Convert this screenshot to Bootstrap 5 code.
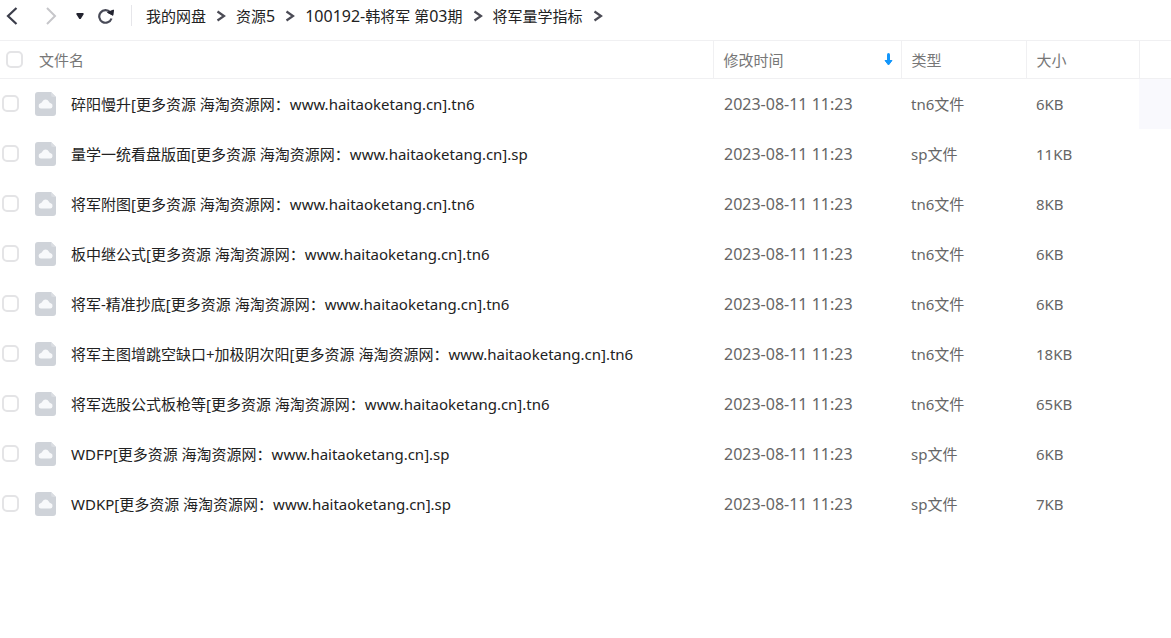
<!DOCTYPE html>
<html lang="zh-CN">
<head>
<meta charset="utf-8">
<meta name="viewport" content="width=device-width, initial-scale=1">
<title>将军量学指标</title>
<link href="https://cdn.jsdelivr.net/npm/bootstrap@5.3.0/dist/css/bootstrap.min.css" rel="stylesheet">
<style>
body { font-family: "Noto Sans", "Noto Sans CJK SC", sans-serif; font-size: 15px; line-height: 22px; color: #333; background: #fff; }
.toolbar { height: 40px; padding: 0 0 9px 2px; }
.tool { border: 0; background: none; padding: 0; width: 20px; height: 24px; display: flex; align-items: center; justify-content: center; }
.tool svg, .file-icon, .crumb-arrow, .sort svg { display: block; flex: none; }
.history { width: 16px; margin: 0 8px 0 14px; }
.divider { width: 1px; height: 21px; background: #e6e6ea; margin: 0 14px 0 15px; }
.crumbs a { color: #222; text-decoration: none; white-space: nowrap; }
.crumbs li { display: flex; align-items: center; }
.crumb-arrow { margin: 0 10px; }
.digits { font-size: 16px; }
.files { table-layout: fixed; width: 100%; }
.files th { height: 38px; padding: 0 8px 0 10px; font-weight: 400; color: #777; border: solid #f0f0f2; border-width: 1px 0 1px 1px; }
.files th:first-child { border-left: 0; padding-left: 6px; }
.files td { height: 50px; padding: 0 9px 0 10px; color: #666; white-space: nowrap; }
.files td:first-child { padding-left: 2px; }
.files td.digits { padding-left: 11px; }
.files label { color: #222; }
.col-date { width: 188px; } .col-type { width: 125px; } .col-size { width: 113px; } .col-more { width: 32px; }
.files .more-active { background: #f9f9fd; }
.form-check-input.pick { width: 17px; height: 17px; margin: 0; border: 2px solid #e4e4e6; border-radius: 5px; flex: none; }
.file-icon { margin: 0 15px 0 16px; }
.sort { border: 0; background: none; padding: 0; }
</style>
</head>
<body>
<svg class="d-none" aria-hidden="true">
  <symbol id="file" viewBox="0 0 21 24"><path d="M3 0h13l5 5v16a3 3 0 0 1-3 3H3a3 3 0 0 1-3-3V3a3 3 0 0 1 3-3z" fill="#cfd3d9"/><path d="M16 0l5 5h-3a2 2 0 0 1-2-2z" fill="#dadde2"/><path d="M6 16.500a2.700 2.700 0 0 1-.6-5.200q1.200-.3 2-1.800a3.600 3.600 0 0 1 6.400 0q.7 1.400 2 1.800a2.700 2.700 0 0 1-.6 5.200z" fill="#f8f9fb"/></symbol>
  <symbol id="next" viewBox="0 0 10 12"><path d="M1.500 1.500L8 6l-6.500 4.500" fill="none" stroke="#4b4b55" stroke-width="2.200"/></symbol>
</svg>
<nav class="toolbar d-flex align-items-center" aria-label="路径">
  <button class="tool" type="button" aria-label="后退"><svg width="14" height="18" viewBox="0 0 14 18"><path d="M11.500 1L3 9l8.500 8" fill="none" stroke="#3b3d4a" stroke-width="2.200"/></svg></button>
  <button class="tool ms-3 ps-1" type="button" aria-label="前进"><svg width="14" height="18" viewBox="0 0 14 18"><path d="M4 1l8 8-8 8" fill="none" stroke="#c6c6ca" stroke-width="2"/></svg></button>
  <button class="tool history" type="button" aria-label="历史"><svg width="8" height="6" viewBox="0 0 8 6"><path d="M.5 0h7v1.500L4.700 6H3.300L.5 1.500z" fill="#22232f"/></svg></button>
  <button class="tool" type="button" aria-label="刷新"><svg width="18" height="16" viewBox="0 0 18 16"><path d="M13.300 4.300A6.300 6.300 0 1 0 14.500 10.500" fill="none" stroke="#484a57" stroke-width="2.200"/><path d="M10.500 4.500l6-2.500-.6 5.300z" fill="#22232f" stroke="#22232f"/></svg></button>
  <span class="divider"></span>
  <ol class="crumbs list-unstyled d-flex mb-0">
    <li><a href="#">我的网盘</a><svg class="crumb-arrow" width="10" height="12"><use href="#next"/></svg></li>
    <li><a href="#">资源<span class="digits">5</span></a><svg class="crumb-arrow" width="10" height="12"><use href="#next"/></svg></li>
    <li><a href="#"><span class="digits">100192-</span>韩将军 第<span class="digits">03</span>期</a><svg class="crumb-arrow" width="10" height="12"><use href="#next"/></svg></li>
    <li><a href="#">将军量学指标</a><svg class="crumb-arrow" width="10" height="12"><use href="#next"/></svg></li>
  </ol>
</nav>
<table class="files">
  <colgroup><col><col class="col-date"><col class="col-type"><col class="col-size"><col class="col-more"></colgroup>
  <thead><tr>
    <th scope="col"><div class="d-flex align-items-center gap-3"><input class="form-check-input pick" type="checkbox" id="all" aria-label="全选"><span>文件名</span></div></th>
    <th scope="col"><div class="d-flex align-items-center justify-content-between"><span>修改时间</span><button class="sort" type="button" aria-label="降序"><svg width="9" height="14" viewBox="0 0 9 14"><path d="M4.500 1.500v8" stroke="#1296fb" stroke-width="3" stroke-linecap="round"/><path d="M1 7.500h7L4.500 12z" fill="#1296fb" stroke="#1296fb" stroke-linejoin="round"/></svg></button></div></th>
    <th scope="col">类型</th><th scope="col">大小</th><th scope="col" aria-label="更多"></th>
  </tr></thead>
  <tbody>
    <tr><td><div class="d-flex align-items-center"><input class="form-check-input pick" type="checkbox" id="f1"><svg class="file-icon" width="21" height="24"><use href="#file"/></svg><label for="f1">碎阳慢升[更多资源 海淘资源网：www.haitaoketang.cn].tn6</label></div></td><td class="digits">2023-08-11 11:23</td><td>tn6文件</td><td>6KB</td><td class="more-active"></td></tr>
    <tr><td><div class="d-flex align-items-center"><input class="form-check-input pick" type="checkbox" id="f2"><svg class="file-icon" width="21" height="24"><use href="#file"/></svg><label for="f2">量学一统看盘版面[更多资源 海淘资源网：www.haitaoketang.cn].sp</label></div></td><td class="digits">2023-08-11 11:23</td><td>sp文件</td><td>11KB</td><td></td></tr>
    <tr><td><div class="d-flex align-items-center"><input class="form-check-input pick" type="checkbox" id="f3"><svg class="file-icon" width="21" height="24"><use href="#file"/></svg><label for="f3">将军附图[更多资源 海淘资源网：www.haitaoketang.cn].tn6</label></div></td><td class="digits">2023-08-11 11:23</td><td>tn6文件</td><td>8KB</td><td></td></tr>
    <tr><td><div class="d-flex align-items-center"><input class="form-check-input pick" type="checkbox" id="f4"><svg class="file-icon" width="21" height="24"><use href="#file"/></svg><label for="f4">板中继公式[更多资源 海淘资源网：www.haitaoketang.cn].tn6</label></div></td><td class="digits">2023-08-11 11:23</td><td>tn6文件</td><td>6KB</td><td></td></tr>
    <tr><td><div class="d-flex align-items-center"><input class="form-check-input pick" type="checkbox" id="f5"><svg class="file-icon" width="21" height="24"><use href="#file"/></svg><label for="f5">将军-精准抄底[更多资源 海淘资源网：www.haitaoketang.cn].tn6</label></div></td><td class="digits">2023-08-11 11:23</td><td>tn6文件</td><td>6KB</td><td></td></tr>
    <tr><td><div class="d-flex align-items-center"><input class="form-check-input pick" type="checkbox" id="f6"><svg class="file-icon" width="21" height="24"><use href="#file"/></svg><label for="f6">将军主图增跳空缺口+加极阴次阳[更多资源 海淘资源网：www.haitaoketang.cn].tn6</label></div></td><td class="digits">2023-08-11 11:23</td><td>tn6文件</td><td>18KB</td><td></td></tr>
    <tr><td><div class="d-flex align-items-center"><input class="form-check-input pick" type="checkbox" id="f7"><svg class="file-icon" width="21" height="24"><use href="#file"/></svg><label for="f7">将军选股公式板枪等[更多资源 海淘资源网：www.haitaoketang.cn].tn6</label></div></td><td class="digits">2023-08-11 11:23</td><td>tn6文件</td><td>65KB</td><td></td></tr>
    <tr><td><div class="d-flex align-items-center"><input class="form-check-input pick" type="checkbox" id="f8"><svg class="file-icon" width="21" height="24"><use href="#file"/></svg><label for="f8">WDFP[更多资源 海淘资源网：www.haitaoketang.cn].sp</label></div></td><td class="digits">2023-08-11 11:23</td><td>sp文件</td><td>6KB</td><td></td></tr>
    <tr><td><div class="d-flex align-items-center"><input class="form-check-input pick" type="checkbox" id="f9"><svg class="file-icon" width="21" height="24"><use href="#file"/></svg><label for="f9">WDKP[更多资源 海淘资源网：www.haitaoketang.cn].sp</label></div></td><td class="digits">2023-08-11 11:23</td><td>sp文件</td><td>7KB</td><td></td></tr>
  </tbody>
</table>
<script src="https://cdn.jsdelivr.net/npm/bootstrap@5.3.0/dist/js/bootstrap.bundle.min.js"></script>
</body>
</html>
